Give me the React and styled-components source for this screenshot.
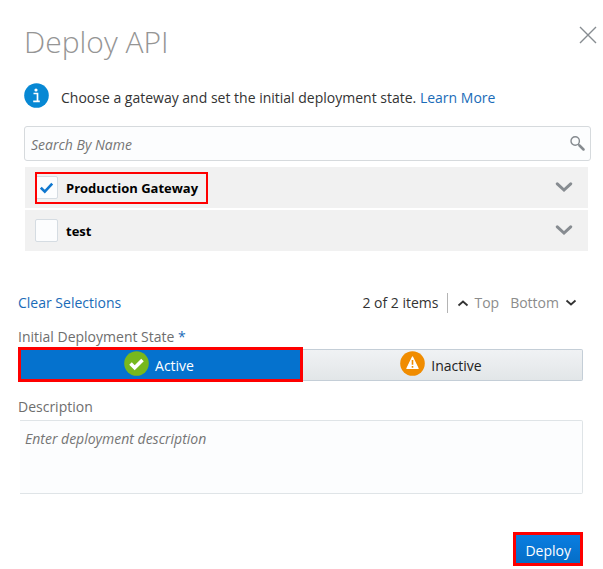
import React, { useState } from "react";
import styled, { createGlobalStyle, css } from "styled-components";

const GlobalStyle = createGlobalStyle`
  *, *::before, *::after { box-sizing: border-box; }
  body {
    margin: 0;
    background: #fff;
    color: #333;
    font-family: "Open Sans", "Noto Sans", sans-serif;
    font-size: 14px;
    line-height: 20px;
  }
  button, input, textarea { font: inherit; color: inherit; }
`;

const highlight = css`
  outline: 3px solid #fe0000;
  outline-offset: -3px;
`;

const Dialog = styled.main`
  display: flex;
  flex-direction: column;
`;

const Header = styled.header`
  display: flex;
  justify-content: space-between;
  align-items: flex-start;
  padding: 22px 6px 0 24px;
`;

const Title = styled.h1`
  margin: 0;
  font-size: 30px;
  line-height: 40px;
  font-weight: 300;
  color: #959595;
`;

const IconButton = styled.button`
  display: flex;
  padding: 0;
  border: 0;
  background: none;
  color: #878c91;
  cursor: pointer;
`;

const CloseButton = styled(IconButton)`
  margin-top: 4px;
`;

const GatewaySection = styled.section`
  display: flex;
  flex-direction: column;
  padding: 21px 12px 0 24px;
`;

const InfoLine = styled.p`
  display: flex;
  align-items: center;
  gap: 12px;
  margin: 0;
  span { padding-top: 4px; }
`;

const TextLink = styled.a`
  color: #1a6bb8;
  text-decoration: none;
`;

const SearchBox = styled.label`
  display: flex;
  align-items: center;
  height: 35px;
  margin-top: 18px;
  padding: 0 5px 0 6px;
  border: 1px solid #d6dadd;
  border-radius: 3px;
  background: #fcfdfe;
`;

const SearchInput = styled.input`
  flex: 1;
  min-width: 0;
  padding: 2px 0 0;
  border: 0;
  outline: 0;
  background: none;
  &::placeholder { color: #757575; font-style: italic; opacity: 1; }
`;

const GatewayList = styled.ul`
  display: flex;
  flex-direction: column;
  gap: 2px;
  margin: 6px 3px 0 1px;
  padding: 0;
  list-style: none;
`;

const GatewayRow = styled.li`
  display: flex;
  align-items: center;
  justify-content: space-between;
  height: 41px;
  padding: 0 15px 0 10px;
  background: #f1f1f1;
`;

const GatewayLabel = styled.label`
  display: flex;
  align-items: center;
  gap: 8px;
  height: 32px;
  padding-right: 10px;
  color: #000;
  font-size: 13px;
  font-weight: 700;
  ${(p) => p.$highlighted && css`
    outline: 2px solid #fe0000;
    outline-offset: -2px;
  `}
`;

const CheckCell = styled.span`
  display: grid;
  place-items: center;
  > * { grid-area: 1 / 1; }
  svg { pointer-events: none; }
`;

const CheckBox = styled.input`
  appearance: none;
  width: 23px;
  height: 23px;
  margin: 0;
  border: 1px solid #d5dce2;
  border-radius: 2px;
  background: #fcfdfe;
`;

const Toolbar = styled.div`
  display: flex;
  justify-content: space-between;
  align-items: center;
  padding: 42px 26px 0 18px;
`;

const Pager = styled.div`
  display: flex;
  align-items: center;
`;

const Divider = styled.span`
  width: 1px;
  height: 20px;
  margin: 0 9px;
  background: #b4b4b4;
`;

const JumpButton = styled.button`
  display: flex;
  align-items: center;
  gap: ${(p) => p.$gap};
  margin-right: ${(p) => p.$after || "0"};
  padding: 0;
  border: 0;
  background: none;
  color: #8c8c8c;
`;

const Form = styled.form`
  display: flex;
  flex-direction: column;
  padding: 14px 20px 0 18px;
`;

const StateField = styled.fieldset`
  min-width: 0;
  margin: 0;
  padding: 0;
  border: 0;
`;

const Legend = styled.legend`
  padding: 0;
  color: #6e6e6e;
`;

const Required = styled.span`
  color: #1a6bb8;
`;

const Segments = styled.div`
  display: grid;
  grid-template-columns: 285fr 280fr;
  height: 35px;
`;

const Segment = styled.button`
  display: flex;
  justify-content: center;
  align-items: center;
  gap: 6px;
  padding: 0 3px 3px 0;
  border: 0;
  color: #222;
  span { padding-top: 5px; }
  ${(p) => p.$active
    ? css`
        background: #0572ce;
        color: #fff;
        ${highlight}
      `
    : css`
        margin: 2px 0 1px;
        border: 1px solid #c4ced7;
        border-left: 0;
        border-radius: 0 2px 2px 0;
        background: linear-gradient(#f0f2f4, #e2e6e8);
      `}
`;

const FieldLabel = styled.label`
  margin-top: 15px;
  color: #6e6e6e;
`;

const Description = styled.textarea`
  height: 74px;
  margin: 3px 0 0 2px;
  padding: 8px 5px;
  border: 1px solid #dfe4e7;
  border-left: 0;
  border-radius: 0 2px 2px 0;
  outline: 0;
  background: #fcfdfe;
  resize: none;
  &::placeholder { color: #757575; font-style: italic; opacity: 1; }
`;

const DeployButton = styled.button`
  align-self: flex-end;
  height: 34px;
  margin-top: 38px;
  padding: 4px 12px 0;
  border: 0;
  background: linear-gradient(#0a80e4, #056cc4);
  color: #fff;
  ${highlight}
`;

const CloseIcon = () => (
  <svg width="18" height="18" viewBox="0 0 18 18" fill="none" stroke="currentColor" strokeWidth="1.4" aria-hidden="true">
    <path d="M1 1 17 17M17 1 1 17" />
  </svg>
);

const InfoIcon = () => (
  <svg width="25" height="25" viewBox="0 0 25 25" aria-hidden="true">
    <circle cx="12.5" cy="12.5" r="12.3" fill="#0788d4" />
    <circle cx="12" cy="7" r="1.6" fill="#fff" />
    <path d="M9.5 10.5h4v7.7M9.2 18.4h6.6" fill="none" stroke="#fff" strokeWidth="1.7" />
  </svg>
);

const SearchIcon = () => (
  <svg width="16" height="16" viewBox="0 0 16 16" fill="none" stroke="#858a8f" aria-hidden="true">
    <circle cx="6.2" cy="5" r="4.2" strokeWidth="1.4" />
    <path d="m9.3 8.2 1.2 1.2" strokeWidth="1.2" />
    <path d="m10.5 9.5 4 4" strokeWidth="2.5" strokeLinecap="round" />
  </svg>
);

const Chevron = () => (
  <svg width="18" height="12" viewBox="0 0 18 12" fill="none" stroke="currentColor" strokeWidth="3" strokeLinecap="round" strokeLinejoin="miter" aria-hidden="true">
    <path d="m2.3 1.8 6.7 6.2 6.7-6.2" />
  </svg>
);

const SmallChevron = ({ up }) => (
  <svg width="12" height="8" viewBox="0 0 12 8" fill="none" stroke="#333" strokeWidth="1.8" aria-hidden="true">
    <path d={up ? "M1.5 6.5 6 2.5l4.5 4" : "M1.5 1.5 6 5.5l4.5-4"} />
  </svg>
);

const BoxTick = () => (
  <svg width="14" height="12" viewBox="0 0 14 12" fill="none" stroke="#0f77cf" strokeWidth="2.6" aria-hidden="true">
    <path d="m.8 5.6 4 4 7.4-8" />
  </svg>
);

const ActiveIcon = () => (
  <svg width="25" height="25" viewBox="0 0 25 25" aria-hidden="true">
    <circle cx="12.5" cy="12.5" r="12.3" fill="#77b81d" />
    <path d="m6.5 12.5 4.2 4.2L18.5 9" fill="none" stroke="#fff" strokeWidth="3.6" />
  </svg>
);

const InactiveIcon = () => (
  <svg width="25" height="25" viewBox="0 0 25 25" aria-hidden="true">
    <circle cx="12.5" cy="12.5" r="12.3" fill="#f08c00" />
    <path d="m12.5 6 5.6 11.5H6.9z" fill="#fff" stroke="#fff" strokeWidth="1.2" strokeLinejoin="round" />
    <path d="M12.5 9v4.8M12.5 15v1.8" stroke="#f08c00" strokeWidth="1.6" />
  </svg>
);

const gateways = [
  { id: "production", name: "Production Gateway", highlighted: true },
  { id: "test", name: "test", highlighted: false },
];

export default function App() {
  const [selected, setSelected] = useState(["production"]);
  const [active, setActive] = useState(true);

  const toggle = (id) =>
    setSelected((s) => (s.includes(id) ? s.filter((x) => x !== id) : [...s, id]));

  return (
    <Dialog>
      <GlobalStyle />
      <Header>
        <Title>Deploy API</Title>
        <CloseButton type="button" aria-label="Close"><CloseIcon /></CloseButton>
      </Header>

      <GatewaySection>
        <InfoLine>
          <InfoIcon />
          <span>
            Choose a gateway and set the initial deployment state.{" "}
            <TextLink href="#learn">Learn More</TextLink>
          </span>
        </InfoLine>
        <SearchBox>
          <SearchInput type="text" placeholder="Search By Name" aria-label="Search By Name" />
          <SearchIcon />
        </SearchBox>
        <GatewayList>
          {gateways.map((g) => (
            <GatewayRow key={g.id}>
              <GatewayLabel $highlighted={g.highlighted}>
                <CheckCell>
                  <CheckBox type="checkbox" checked={selected.includes(g.id)} onChange={() => toggle(g.id)} />
                  {selected.includes(g.id) && <BoxTick />}
                </CheckCell>
                {g.name}
              </GatewayLabel>
              <IconButton type="button" aria-label={`Expand ${g.name}`}><Chevron /></IconButton>
            </GatewayRow>
          ))}
        </GatewayList>
      </GatewaySection>

      <Toolbar>
        <TextLink href="#clear">Clear Selections</TextLink>
        <Pager>
          <span>2 of 2 items</span>
          <Divider />
          <JumpButton type="button" $gap="5px" $after="11px"><SmallChevron up />Top</JumpButton>
          <JumpButton type="button" $gap="6px">Bottom<SmallChevron /></JumpButton>
        </Pager>
      </Toolbar>

      <Form onSubmit={(e) => e.preventDefault()}>
        <StateField>
          <Legend>Initial Deployment State <Required>*</Required></Legend>
          <Segments>
            <Segment type="button" $active={active} aria-pressed={active} onClick={() => setActive(true)}>
              <ActiveIcon /><span>Active</span>
            </Segment>
            <Segment type="button" $active={!active} aria-pressed={!active} onClick={() => setActive(false)}>
              <InactiveIcon /><span>Inactive</span>
            </Segment>
          </Segments>
        </StateField>
        <FieldLabel htmlFor="description">Description</FieldLabel>
        <Description id="description" placeholder="Enter deployment description" />
        <DeployButton type="submit">Deploy</DeployButton>
      </Form>
    </Dialog>
  );
}
